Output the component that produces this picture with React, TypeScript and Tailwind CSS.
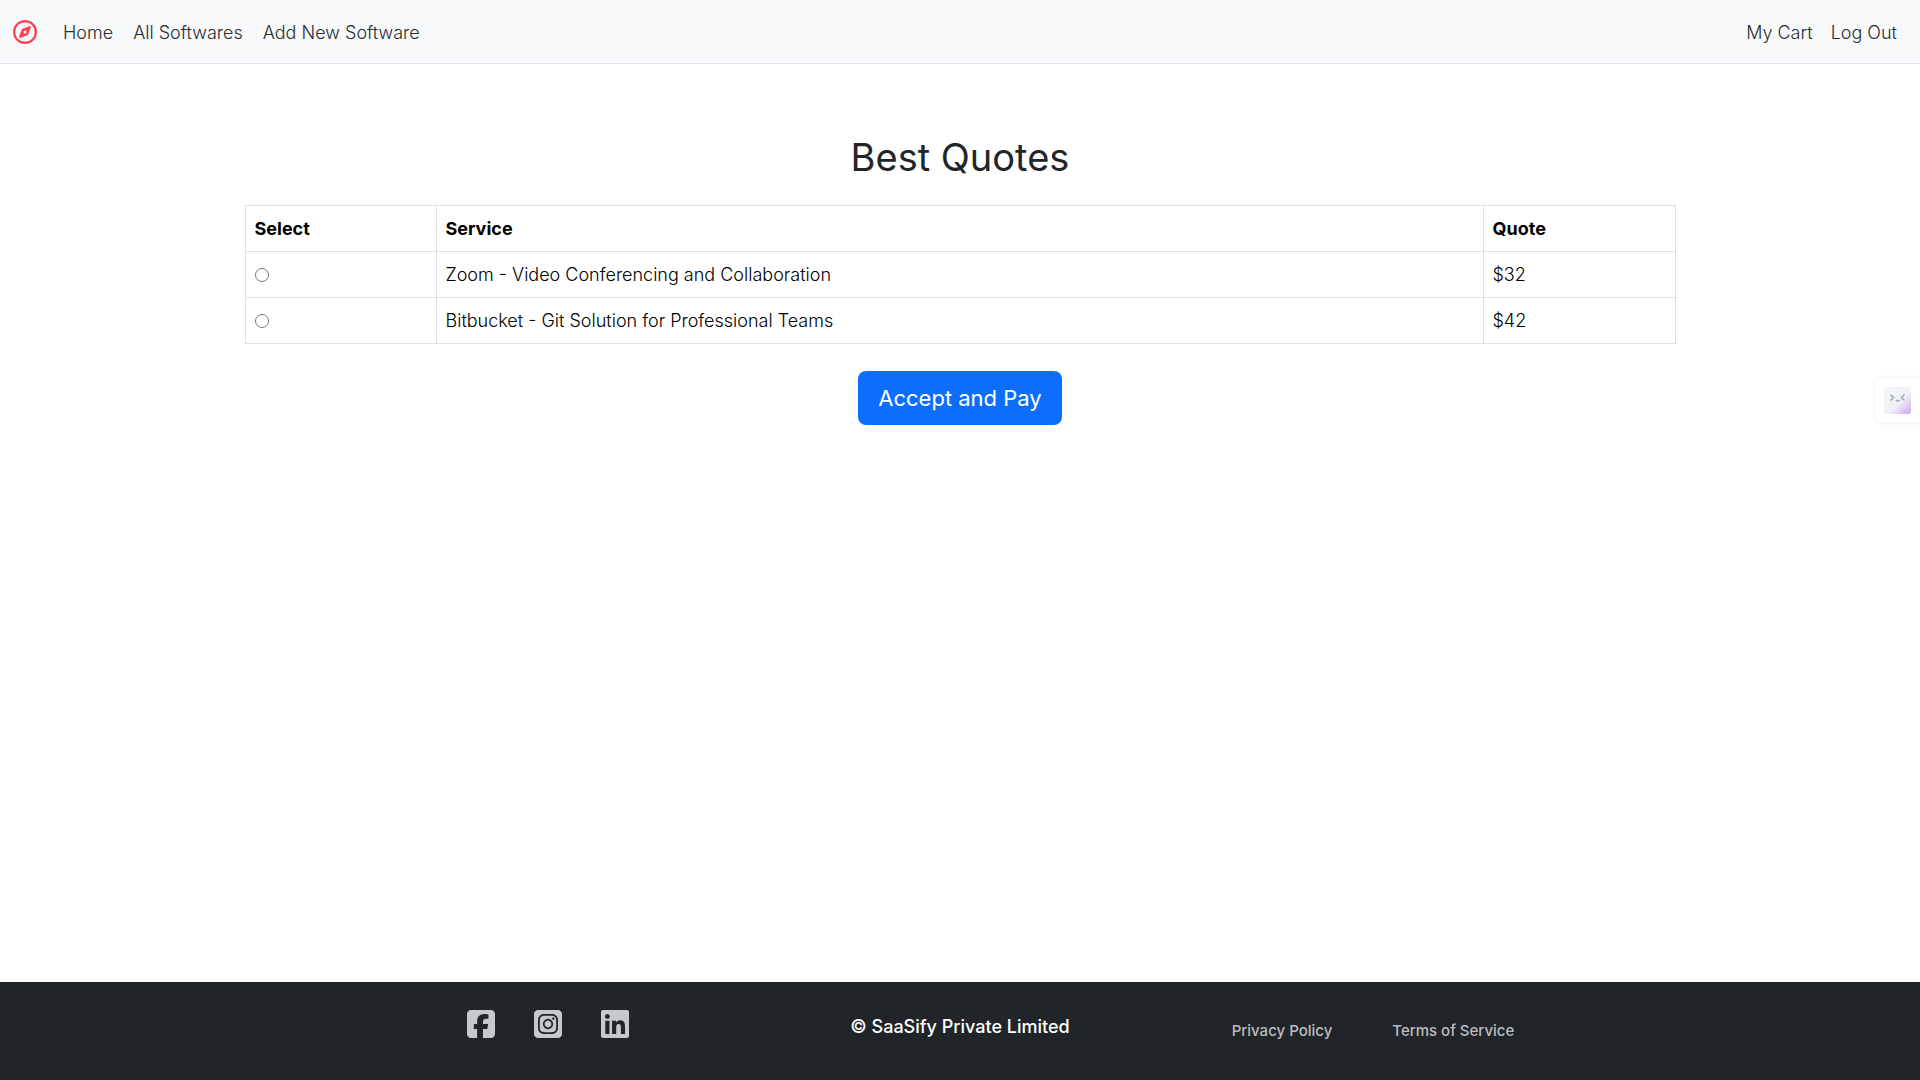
import React, { useState } from "react";
import {
  FaLinkedin,
  FaRegCompass,
  FaSquareFacebook,
  FaSquareInstagram,
} from "react-icons/fa6";

const quotes = [
  { id: "zoom", service: "Zoom - Video Conferencing and Collaboration", price: "$32" },
  { id: "bitbucket", service: "Bitbucket - Git Solution for Professional Teams", price: "$42" },
];

function Navbar() {
  return (
    <nav className="flex h-16 items-center border-b border-[#dee2e6] bg-[#f8f9fb] px-[13px] font-light text-[#2a2d30]">
      <a href="#" aria-label="SaaSify" className="mr-[26px] text-[#fe424d]">
        <FaRegCompass className="size-6" />
      </a>
      <div className="flex flex-1 justify-between pt-0.5">
        <div className="flex gap-5">
          <a href="#home">Home</a>
          <a href="#softwares">All Softwares</a>
          <a href="#new">Add New Software</a>
        </div>
        <div className="flex gap-[18px] pr-[10px]">
          <a href="#cart">My Cart</a>
          <a href="#logout">Log Out</a>
        </div>
      </div>
    </nav>
  );
}

function QuoteTable() {
  const [selected, setSelected] = useState("");
  return (
    <table className="mt-[25px] w-full table-fixed border-collapse text-left">
      <colgroup>
        <col className="w-[191px]" />
        <col />
        <col className="w-[192px]" />
      </colgroup>
      <thead>
        <tr className="h-[46px] font-semibold text-black">
          <th className="border border-[#dee2e6] px-[9px]">Select</th>
          <th className="border border-[#dee2e6] px-[9px]">Service</th>
          <th className="border border-[#dee2e6] px-[9px]">Quote</th>
        </tr>
      </thead>
      <tbody className="font-light text-black">
        {quotes.map((q) => (
          <tr key={q.id} className="h-[46px]">
            <td className="border border-[#dee2e6] px-[9px]">
              <input
                type="radio"
                name="quote"
                id={q.id}
                checked={selected === q.id}
                onChange={() => setSelected(q.id)}
                className="block size-[14px] appearance-none rounded-full border border-[#767676] bg-white checked:border-4 checked:border-[#0d6efd]"
              />
            </td>
            <td className="border border-[#dee2e6] px-[9px]">
              <label htmlFor={q.id}>{q.service}</label>
            </td>
            <td className="border border-[#dee2e6] px-[9px]">{q.price}</td>
          </tr>
        ))}
      </tbody>
    </table>
  );
}

function AssistantTab() {
  return (
    <button
      aria-label="Open assistant"
      className="fixed top-[378px] right-0 flex h-[45px] w-[45px] items-center rounded-l-lg bg-white pl-[9px] shadow-[0_0_4px_rgba(0,0,0,0.08)]"
    >
      <svg viewBox="0 0 27 27" className="size-[27px]" fill="none">
        <defs>
          <linearGradient id="tab-face" x1="4" y1="4" x2="27" y2="27" gradientUnits="userSpaceOnUse">
            <stop offset="0" stopColor="#f1f5f9" />
            <stop offset="0.5" stopColor="#f0f0f8" />
            <stop offset="1" stopColor="#cda5ee" />
          </linearGradient>
        </defs>
        <rect width="27" height="27" rx="3" fill="url(#tab-face)" />
        <path d="M6.5 7.5 9.5 10.5 6.5 13.5M20.5 7.5 17.5 10.5 20.5 13.5" stroke="#a6a8ad" strokeWidth="1.6" />
        <path d="M12 13q2 2 4 0" stroke="#a6a8ad" strokeWidth="1.5" />
      </svg>
    </button>
  );
}

function Footer() {
  return (
    <footer className="grid h-[98px] grid-cols-[1fr_auto_1fr] items-start bg-[#212529] text-white">
      <div className="flex justify-end gap-[39px] pt-[26px] pr-[221px] text-[#c7c8ca]">
        <a href="#facebook" aria-label="Facebook"><FaSquareFacebook className="h-8 w-7" /></a>
        <a href="#instagram" aria-label="Instagram"><FaSquareInstagram className="h-8 w-7" /></a>
        <a href="#linkedin" aria-label="LinkedIn"><FaLinkedin className="h-8 w-7" /></a>
      </div>
      <p className="pt-[31px] font-medium">© SaaSify Private Limited</p>
      <div className="flex gap-[60px] pt-[35px] pl-[162px] text-[15px] font-medium text-[#bcbdbf]">
        <a href="#privacy">Privacy Policy</a>
        <a href="#terms">Terms of Service</a>
      </div>
    </footer>
  );
}

export default function App() {
  return (
    <div className="flex min-h-screen flex-col bg-white font-['Inter',sans-serif] text-[18px] leading-7">
      <Navbar />
      <main className="mx-auto flex w-full max-w-[1431px] flex-1 flex-col items-center pt-[70px]">
        <h1 className="text-[38px] leading-[46px] text-[#212529]">Best Quotes</h1>
        <QuoteTable />
        <button className="mt-[27px] h-[54px] rounded-lg bg-[#0d6efd] px-5 text-[22px] text-white">
          Accept and Pay
        </button>
      </main>
      <Footer />
      <AssistantTab />
    </div>
  );
}
